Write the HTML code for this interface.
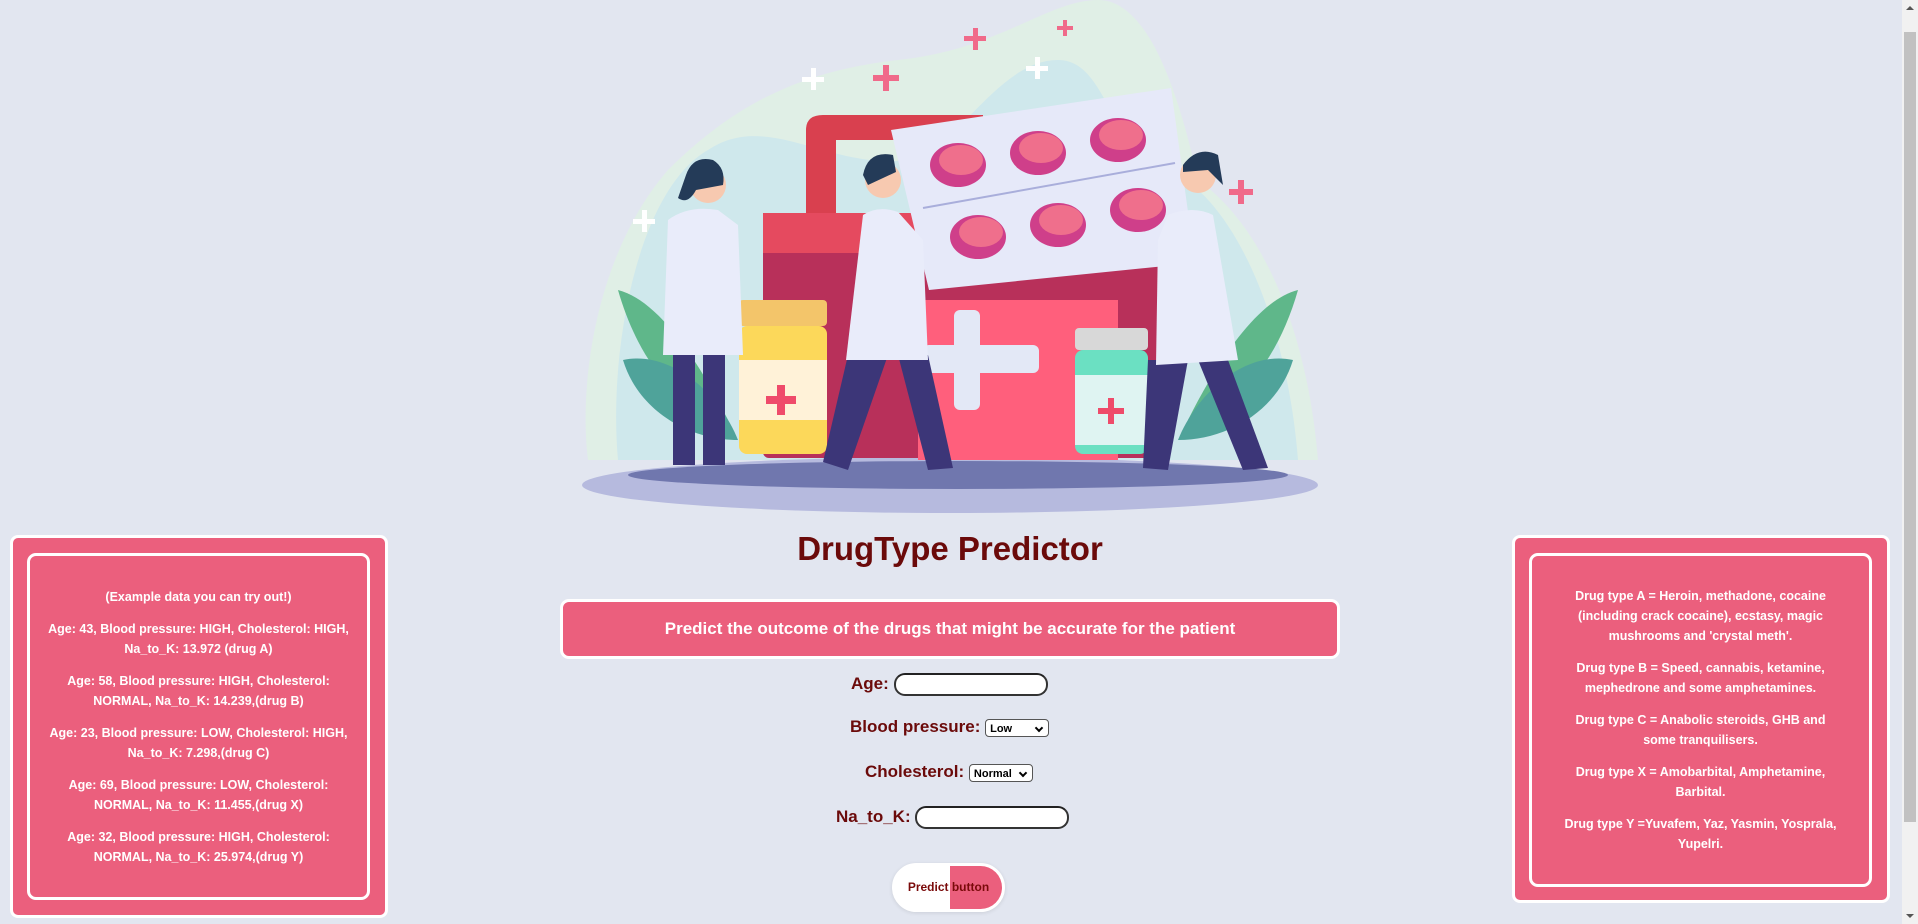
<!DOCTYPE html>
<html><head><meta charset="utf-8"><style>
html,body{margin:0;padding:0}
body{width:1918px;height:924px;background:#e2e6f0;position:relative;overflow:hidden;font-family:"Liberation Sans Narrow","Liberation Sans",sans-serif;font-weight:bold}
.box{position:absolute;background:#eb5f7d;border:3px solid #fff;border-radius:8px;box-sizing:border-box}
.inner{position:absolute;border:3px solid #fff;border-radius:9px;box-sizing:border-box;color:#fff;text-align:center;font-size:12.5px;line-height:20px;display:flex;flex-direction:column;justify-content:center;padding:0 14px}
.inner p{margin:0 0 12px}
.lbl{position:absolute;color:#6b0a0a;font-size:17px;white-space:nowrap}
.inp{display:inline-block;vertical-align:middle;background:#fff;border:2px solid #333;border-top-color:#222;border-radius:11px;height:19px}
.sel{display:inline-block;vertical-align:middle;background:#fff;border:1px solid #555;border-radius:4px;height:18px;font-size:11px;color:#000;line-height:18px;padding-left:4px;box-sizing:border-box;position:relative}
.sel:after{content:"";position:absolute;right:6px;top:5px;width:4px;height:4px;border-right:2px solid #000;border-bottom:2px solid #000;transform:rotate(45deg)}
</style></head><body>
<svg style="position:absolute;left:578px;top:0" width="744" height="514" viewBox="0 0 744 514">
<path d="M10 460 C0 380 20 250 90 170 C160 100 230 70 320 60 C420 50 470 0 520 0 C570 0 600 90 620 180 C690 230 730 340 740 460 Z" fill="#e0efe6"/>
<path d="M40 460 C30 350 60 190 130 150 C190 110 250 170 330 160 C380 150 420 60 480 60 C530 60 530 150 590 170 C660 200 710 330 720 460 Z" fill="#cfe8ec"/>
<ellipse cx="372" cy="485" rx="368" ry="28" fill="#b6bade"/>
<ellipse cx="380" cy="475" rx="330" ry="14" fill="#7077ae"/>
<path d="M40 290 C80 300 120 360 150 420 C100 410 60 360 40 290Z" fill="#5fb78a"/>
<path d="M45 360 C90 350 140 390 160 440 C110 440 60 410 45 360Z" fill="#4fa39a"/>
<path d="M720 290 C680 300 640 360 610 420 C660 410 700 360 720 290Z" fill="#5fb78a"/>
<path d="M715 360 C670 350 620 390 600 440 C650 440 700 410 715 360Z" fill="#4fa39a"/>
<path d="M228 213 V130 Q228 115 245 115 H405 V140 H258 V213 Z" fill="#d9404f"/>
<rect x="185" y="213" width="400" height="245" rx="6" fill="#b8305a"/>
<rect x="185" y="213" width="400" height="40" fill="#e54a5f"/>
<rect x="340" y="300" width="200" height="160" fill="#ff5f7c"/>
<rect x="376" y="310" width="26" height="100" rx="6" fill="#e3e8f6"/>
<rect x="345" y="345" width="116" height="28" rx="6" fill="#e3e8f6"/>
<rect x="161" y="300" width="88" height="26" rx="4" fill="#f3c56a"/>
<rect x="161" y="326" width="88" height="128" rx="8" fill="#fcd85a"/>
<rect x="161" y="360" width="88" height="60" fill="#fff2d8"/>
<rect x="199" y="385" width="8" height="30" fill="#ef4b6a"/><rect x="188" y="396" width="30" height="8" fill="#ef4b6a"/>
<rect x="497" y="328" width="73" height="22" rx="4" fill="#d8d8d8"/>
<rect x="497" y="350" width="73" height="104" rx="8" fill="#6be0c2"/>
<rect x="497" y="375" width="73" height="70" fill="#dff4f2"/>
<rect x="530" y="398" width="6" height="26" fill="#ef4b6a"/><rect x="520" y="408" width="26" height="6" fill="#ef4b6a"/>
<polygon points="313,130 593,88 617,263 351,290" fill="#e6e9f9"/>
<line x1="345" y1="208" x2="597" y2="163" stroke="#a9aedb" stroke-width="2"/>
<g fill="#cf3f8a"><ellipse cx="380" cy="165" rx="28" ry="22"/><ellipse cx="460" cy="153" rx="28" ry="22"/><ellipse cx="540" cy="140" rx="28" ry="22"/><ellipse cx="400" cy="237" rx="28" ry="22"/><ellipse cx="480" cy="225" rx="28" ry="22"/><ellipse cx="560" cy="210" rx="28" ry="22"/></g>
<g fill="#ef6f8c"><ellipse cx="383" cy="160" rx="22" ry="15"/><ellipse cx="463" cy="148" rx="22" ry="15"/><ellipse cx="543" cy="135" rx="22" ry="15"/><ellipse cx="403" cy="232" rx="22" ry="15"/><ellipse cx="483" cy="220" rx="22" ry="15"/><ellipse cx="563" cy="205" rx="22" ry="15"/></g>
<g fill="#3c3678">
<rect x="95" y="345" width="22" height="120"/><rect x="125" y="345" width="22" height="120"/>
<polygon points="270,355 310,355 270,470 245,462"/><polygon points="320,355 350,355 375,468 350,470"/>
<polygon points="570,360 610,360 590,470 565,468"/><polygon points="620,360 650,360 690,468 665,470"/>
</g>
<g fill="#e9ecfa">
<path d="M90 220 Q110 205 140 210 L160 225 L165 355 L85 355 Z"/>
<path d="M285 215 Q300 205 320 212 L345 240 L350 360 L268 360 Z"/>
<path d="M590 215 Q615 205 635 215 L660 360 L578 365 L580 240 Z"/>
</g>
<g fill="#f7c9b0"><circle cx="130" cy="185" r="18"/><circle cx="305" cy="180" r="18"/><circle cx="620" cy="175" r="18"/></g>
<g fill="#243b58"><path d="M108 175 Q115 155 135 160 Q148 168 145 185 L118 190 Q110 205 100 198Z"/><path d="M285 175 Q290 150 315 155 L318 172 L290 185Z"/><path d="M605 165 Q620 145 640 155 L645 185 L630 170 L605 172Z"/></g>
<g fill="#f06a8a"><rect x="395" y="28" width="5" height="22"/><rect x="386" y="36" width="22" height="5"/><rect x="305" y="65" width="6" height="26"/><rect x="295" y="75" width="26" height="6"/><rect x="485" y="20" width="4" height="16"/><rect x="479" y="26" width="16" height="4"/><rect x="660" y="180" width="6" height="24"/><rect x="651" y="189" width="24" height="6"/></g>
<g fill="#fff"><rect x="233" y="68" width="5" height="22"/><rect x="224" y="77" width="22" height="5"/><rect x="457" y="57" width="5" height="22"/><rect x="448" y="66" width="22" height="5"/><rect x="64" y="210" width="5" height="22"/><rect x="55" y="219" width="22" height="5"/></g>
</svg>

<div class="box" style="left:10px;top:535px;width:378px;height:383px"></div>
<div class="inner" style="left:27px;top:553px;width:343px;height:347px">
<p>(Example data you can try out!)</p>
<p>Age: 43, Blood pressure: HIGH, Cholesterol: HIGH, Na_to_K: 13.972 (drug A)</p>
<p>Age: 58, Blood pressure: HIGH, Cholesterol: NORMAL, Na_to_K: 14.239,(drug B)</p>
<p>Age: 23, Blood pressure: LOW, Cholesterol: HIGH, Na_to_K: 7.298,(drug C)</p>
<p>Age: 69, Blood pressure: LOW, Cholesterol: NORMAL, Na_to_K: 11.455,(drug X)</p>
<p style="margin:0">Age: 32, Blood pressure: HIGH, Cholesterol: NORMAL, Na_to_K: 25.974,(drug Y)</p>
</div>

<div class="box" style="left:1512px;top:535px;width:378px;height:368px"></div>
<div class="inner" style="left:1529px;top:553px;width:343px;height:334px;padding:0 28px">
<p>Drug type A = Heroin, methadone, cocaine (including crack cocaine), ecstasy, magic mushrooms and 'crystal meth'.</p>
<p>Drug type B = Speed, cannabis, ketamine, mephedrone and some amphetamines.</p>
<p>Drug type C = Anabolic steroids, GHB and some tranquilisers.</p>
<p>Drug type X = Amobarbital, Amphetamine, Barbital.</p>
<p style="margin:0">Drug type Y =Yuvafem, Yaz, Yasmin, Yosprala, Yupelri.</p>
</div>

<div style="position:absolute;left:560px;width:780px;top:530px;text-align:center;color:#6b0a0a;font-size:33px">DrugType Predictor</div>
<div class="box" style="left:560px;top:599px;width:780px;height:60px;border-radius:9px;color:#fff;font-size:17px;text-align:center;line-height:54px">Predict the outcome of the drugs that might be accurate for the patient</div>

<div class="lbl" style="left:851px;top:673px">Age: <span class="inp" style="width:150px"></span></div>
<div class="lbl" style="left:850px;top:717px">Blood pressure: <span class="sel" style="width:64px">Low</span></div>
<div class="lbl" style="left:865px;top:762px">Cholesterol: <span class="sel" style="width:64px">Normal</span></div>
<div class="lbl" style="left:836px;top:806px">Na_to_K: <span class="inp" style="width:150px"></span></div>

<div style="position:absolute;left:892px;top:863px;width:113px;height:49px;border-radius:25px;border:3px solid #fff;box-sizing:border-box;overflow:hidden;background:#fff;box-shadow:0 1px 4px rgba(0,0,0,.1)">
<div style="position:absolute;left:55px;top:0;right:0;bottom:0;background:#eb5f7d"></div>
<div style="position:absolute;left:0;right:0;top:14px;text-align:center;color:#7a0a0a;font-size:12px">Predict button</div>
</div>

<div style="position:absolute;left:1902px;top:0;width:16px;height:924px;background:#f1f1f1"></div>
<div style="position:absolute;left:1904px;top:32px;width:12px;height:790px;background:#c1c1c1"></div>
<div style="position:absolute;left:1906px;top:914px;width:0;height:0;border-left:4px solid transparent;border-right:4px solid transparent;border-top:4px solid #555"></div>
<div style="position:absolute;left:1906px;top:6px;width:0;height:0;border-left:4px solid transparent;border-right:4px solid transparent;border-bottom:4px solid #555"></div>
</body></html>
